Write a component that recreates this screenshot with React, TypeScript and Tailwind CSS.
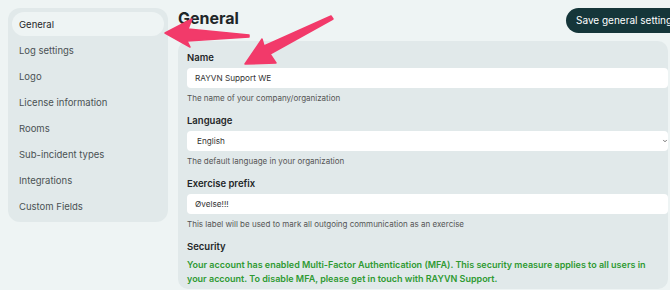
import { ChevronDown } from "lucide-react";

const navItems = [
  "General",
  "Log settings",
  "Logo",
  "License information",
  "Rooms",
  "Sub-incident types",
  "Integrations",
  "Custom Fields",
];

function Field({
  label,
  value,
  help,
  select,
}: {
  label: string;
  value: string;
  help: string;
  select?: boolean;
}) {
  return (
    <div className="mb-[10px]">
      <div className="h-[14px] text-[9.5px] leading-[14px] font-semibold text-[#1f2628]">{label}</div>
      <div className="mt-[3px] h-[20px] rounded-[4px] bg-white flex items-center pl-[8px] pr-0 text-[8.2px] text-[#333]">
        <span className={select ? "pl-[2px]" : ""}>{value}</span>
        {select && <ChevronDown size={6} strokeWidth={3} className="ml-auto text-[#444]" />}
      </div>
      <div className="mt-[4px] h-[12px] text-[8px] leading-[12px] text-[#555]">{help}</div>
    </div>
  );
}

export default function App() {
  return (
    <div
      className="relative w-[670px] h-[290px] overflow-hidden bg-[#eef4f4]"
      style={{ fontFamily: "Inter, 'Liberation Sans', sans-serif" }}
    >
      <div className="flex items-start">
        <nav className="ml-[8px] mt-[8px] w-[160px] shrink-0 rounded-[12px] bg-[#e1e9ea] p-[4px] flex flex-col gap-[2px]">
          {navItems.map((item, i) => (
            <div
              key={item}
              className={
                i === 0
                  ? "h-[24px] flex items-center pl-[7px] pt-[3px] rounded-full bg-[#eef4f4] text-[9.5px] text-[#1f2628]"
                  : "h-[24px] flex items-center pl-[7px] pt-[3px] text-[9.5px] text-[#4a5254]"
              }
            >
              {item}
            </div>
          ))}
        </nav>

        <main className="ml-[10px] w-[490px] shrink-0">
          <div className="flex items-center h-[41px]">
            <div className="w-[388px] shrink-0">
              <h1 className="text-[16px] font-bold text-[#1f2628] -mt-[5px]">General</h1>
            </div>
            <button className="-mt-[1px] h-[25px] shrink-0 rounded-full bg-[#15363a] px-[10px] text-[10px] text-white whitespace-nowrap">
              Save general settings
            </button>
          </div>
          <div className="rounded-[10px] bg-[#e1e9ea] pt-[10px] pl-[9px] pb-[12px] h-[248px]">
            <Field label="Name" value="RAYVN Support WE" help="The name of your company/organization" />
            <Field label="Language" value="English" help="The default language in your organization" select />
            <Field
              label="Exercise prefix"
              value="Øvelse!!!"
              help="This label will be used to mark all outgoing communication as an exercise"
            />
            <div className="h-[14px] text-[9.5px] leading-[14px] font-semibold text-[#1f2628]">Security</div>
            <p className="mt-[4px] text-[9px] leading-[14px] font-semibold text-[#2f9a32] pr-[4px]">
              Your account has enabled Multi-Factor Authentication (MFA). This security measure applies to all users in
              your account. To disable MFA, please get in touch with RAYVN Support.
            </p>
          </div>
        </main>
      </div>

      {/* annotation arrows */}
      <svg className="absolute left-0 top-0 pointer-events-none" width="670" height="290">
        <polygon
          points="165,33 192,19 188,29 249,35 249,37 187,41 190,47"
          fill="#f23a6a"
          stroke="#f23a6a"
          strokeWidth="1.5"
          strokeLinejoin="round"
        />
        <polygon
          points="245,64 262,39 264,46 331,16 333,19 270,54 276,63"
          fill="#f23a6a"
          stroke="#f23a6a"
          strokeWidth="1.5"
          strokeLinejoin="round"
        />
      </svg>
    </div>
  );
}
